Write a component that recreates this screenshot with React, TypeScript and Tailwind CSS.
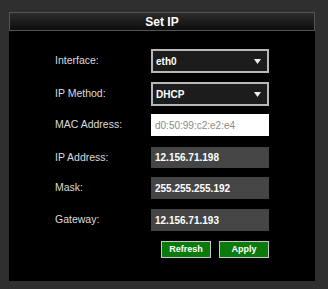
import React from "react";

const font = { fontFamily: '"Liberation Sans", Arial, sans-serif' };

function Select({ value }: { value: string }) {
  return (
    <div className="w-[118px] h-[24px] border-2 border-[#b8b8b8] bg-[#1c1c1c] flex items-center justify-between pl-[3px] pr-[6px]">
      <span className="text-[10px] font-bold text-white">{value}</span>
      <svg width="7" height="5" viewBox="0 0 7 5"><path d="M0 0h7L3.5 5z" fill="#eee" /></svg>
    </div>
  );
}

function ValueBox({ value, h }: { value: string; h: string }) {
  return (
    <div className={`w-[118px] ${h} bg-[#454545] flex items-center pl-[4px]`}>
      <span className="text-[10px] font-bold text-white">{value}</span>
    </div>
  );
}

function Row({ label, children, mt }: { label: string; children: React.ReactNode; mt: string }) {
  return (
    <div className={`flex items-center ${mt}`}>
      <div className="w-[96px] text-[10.5px] text-[#dcdcdc]">{label}</div>
      {children}
    </div>
  );
}

export default function App() {
  return (
    <div className="w-[328px] h-[289px] bg-[#2f2f2f] pt-[12px] pl-[9px]" style={font}>
      <div className="w-[306px] h-[269px] bg-black flex flex-col">
        <div className="h-[19px] border border-[#545454] bg-gradient-to-b from-[#2c2c2c] to-[#0e0e0e] flex items-center justify-center">
          <span className="text-[12px] font-bold text-white">Set IP</span>
        </div>
        <div className="pl-[46px] flex flex-col">
          <Row label="Interface:" mt="mt-[18px]"><Select value="eth0" /></Row>
          <Row label="IP Method:" mt="mt-[9px]"><Select value="DHCP" /></Row>
          <Row label="MAC Address:" mt="mt-[8px]">
            <div className="w-[118px] h-[22px] bg-white flex items-center pl-[4px]">
              <span className="text-[10px] text-[#8a8a8a]">d0:50:99:c2:e2:e4</span>
            </div>
          </Row>
          <Row label="IP Address:" mt="mt-[11px]"><ValueBox value="12.156.71.198" h="h-[21px]" /></Row>
          <Row label="Mask:" mt="mt-[9px]"><ValueBox value="255.255.255.192" h="h-[22px]" /></Row>
          <Row label="Gateway:" mt="mt-[10px]"><ValueBox value="12.156.71.193" h="h-[22px]" /></Row>
          <div className="flex mt-[10px] pl-[106px] gap-[8px]">
            <button className="w-[50px] h-[17px] bg-[#0a7a0a] border border-[#c8c8c8] text-white text-[9px] font-bold flex items-center justify-center">Refresh</button>
            <button className="w-[50px] h-[17px] bg-[#0a7a0a] border border-[#c8c8c8] text-white text-[9px] font-bold flex items-center justify-center">Apply</button>
          </div>
        </div>
      </div>
    </div>
  );
}
